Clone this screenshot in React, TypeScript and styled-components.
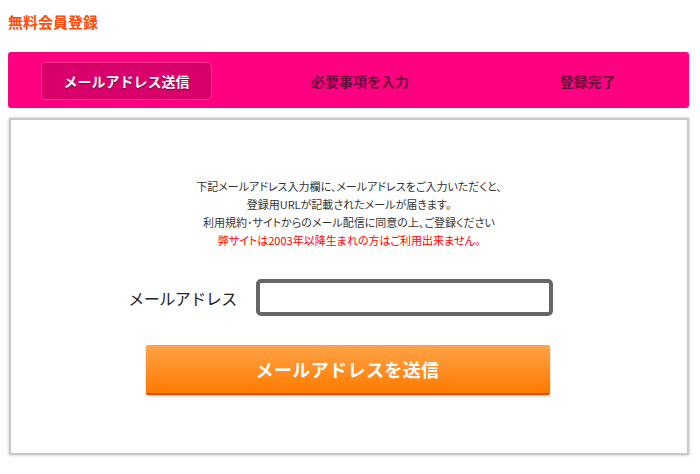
import styled, { createGlobalStyle } from 'styled-components';

const GlobalStyle = createGlobalStyle`
  html, body {
    margin: 0;
    padding: 0;
    background: #fff;
    font-family: 'Noto Sans CJK JP', 'Noto Sans', sans-serif;
  }
`;

const Page = styled.div`
  width: 700px;
  height: 474px;
  padding: 12px 11px 0 8px;
  box-sizing: border-box;
`;

const PageTitle = styled.h1`
  margin: 0;
  font-size: 15px;
  line-height: 19px;
  font-weight: 700;
  color: #ff4a0a;
`;

const StepBar = styled.ol`
  list-style: none;
  margin: 21px 0 0;
  padding: 10px 22px 8px 33px;
  height: 56px;
  box-sizing: border-box;
  background: #ff0080;
  border-radius: 3px;
  display: grid;
  grid-template-columns: 171px 296px 1fr;
`;

const Step = styled.li<{ $active?: boolean }>`
  display: flex;
  align-items: center;
  justify-content: center;
  font-size: 14px;
  font-weight: 700;
  border-radius: 5px;
  color: ${({ $active }) => ($active ? '#fff' : '#6a0a3a')};
  background: ${({ $active }) => ($active ? '#d8006a' : 'transparent')};
  border: 1px solid ${({ $active }) => ($active ? '#f03a8c' : 'transparent')};
  text-shadow: ${({ $active }) => ($active ? '0 1px 1px rgba(80,0,40,0.6)' : 'none')};
`;

const Card = styled.section`
  margin: 10px 0 0 1px;
  height: 337px;
  box-sizing: border-box;
  border: 2px solid #c8c8c8;
  box-shadow: 0 0 3px rgba(0, 0, 0, 0.25);
  padding-top: 57px;
  display: flex;
  flex-direction: column;
  align-items: center;
`;

const Notice = styled.div`
  text-align: center;
  font-size: 11px;
  line-height: 18px;
  color: #333;
  font-feature-settings: 'palt';
`;

const Warning = styled.div`
  color: #ff0000;
`;

const FieldRow = styled.div`
  margin-top: 30px;
  display: flex;
  align-items: center;
  gap: 19px;
  margin-left: -17px;
`;

const Label = styled.label`
  font-size: 16px;
  color: #222;
  letter-spacing: -0.5px;
`;

const EmailInput = styled.input`
  width: 297px;
  height: 37px;
  box-sizing: border-box;
  border: 4px solid #666;
  border-radius: 5px;
  outline: none;
`;

const SubmitButton = styled.button`
  margin-top: 29px;
  margin-left: -3px;
  width: 404px;
  height: 50px;
  border: none;
  border-bottom: 2px solid #c85600;
  border-radius: 2px;
  background: linear-gradient(#ffa347, #ff7a00);
  box-shadow: 0 1px 2px rgba(0, 0, 0, 0.3);
  color: #fff;
  font-family: inherit;
  font-size: 18px;
  font-weight: 700;
  letter-spacing: 0.4px;
  cursor: pointer;
`;

export default function App() {
  return (
    <>
      <GlobalStyle />
      <Page>
        <PageTitle>無料会員登録</PageTitle>
        <StepBar>
          <Step $active>メールアドレス送信</Step>
          <Step>必要事項を入力</Step>
          <Step>登録完了</Step>
        </StepBar>
        <Card>
          <Notice>
            <div>下記メールアドレス入力欄に、メールアドレスをご入力いただくと、</div>
            <div>登録用URLが記載されたメールが届きます。</div>
            <div>利用規約･サイトからのメール配信に同意の上、ご登録ください</div>
            <Warning>弊サイトは2003年以降生まれの方はご利用出来ません。</Warning>
          </Notice>
          <FieldRow>
            <Label htmlFor="email">メールアドレス</Label>
            <EmailInput id="email" type="email" />
          </FieldRow>
          <SubmitButton type="button">メールアドレスを送信</SubmitButton>
        </Card>
      </Page>
    </>
  );
}
